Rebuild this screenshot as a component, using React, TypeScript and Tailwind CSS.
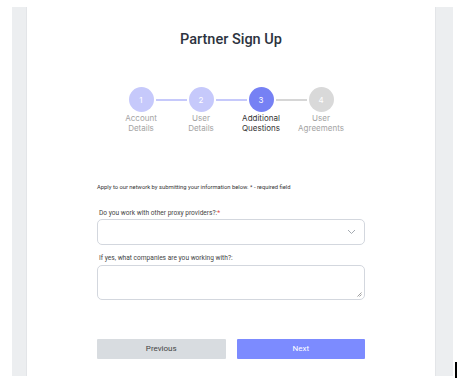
import React from 'react';

const steps = [
  { n: 1, label: ['Account', 'Details'], state: 'done' },
  { n: 2, label: ['User', 'Details'], state: 'done' },
  { n: 3, label: ['Additional', 'Questions'], state: 'active' },
  { n: 4, label: ['User', 'Agreements'], state: 'todo' },
];

const circleClass: Record<string, string> = {
  done: 'bg-[#c6c9fb]',
  active: 'bg-[#7681f4]',
  todo: 'bg-[#d9d9d9]',
};

const Stepper: React.FC = () => (
  <div className="flex flex-col items-center font-['Inter',sans-serif]">
    <div className="flex items-center">
      {steps.map((s, i) => (
        <React.Fragment key={s.n}>
          <div
            className={`w-[25px] h-[25px] rounded-full flex items-center justify-center text-[8px] text-white ${circleClass[s.state]}`}
          >
            {s.n}
          </div>
          {i < steps.length - 1 && (
            <div
              className={`w-[31px] h-[2px] mx-[2px] ${i < 2 ? 'bg-[#c6c9fb]' : 'bg-[#d6d6d6]'}`}
            />
          )}
        </React.Fragment>
      ))}
    </div>
    <div className="flex mt-[1px]">
      {steps.map((s) => (
        <div
          key={s.n}
          className={`w-[60px] text-center text-[8px] leading-[10px] ${s.state === 'active' ? 'text-[#333]' : 'text-[#a3a3a3]'}`}
        >
          <div>{s.label[0]}</div>
          <div>{s.label[1]}</div>
        </div>
      ))}
    </div>
  </div>
);

const App: React.FC = () => {
  return (
    <div className="relative w-[460px] h-[382px] bg-white pt-[7px] pb-[6px] flex font-['Roboto',sans-serif]">
      <div className="w-[12px]" />
      <div className="w-[15px] bg-[#eceef0] border-r border-[#e3e5e8]" />
      <div className="flex-1 flex flex-col items-center pt-[23px]">
        <h1 className="text-[14.5px] leading-[20px] font-medium text-[#2d3340]">Partner Sign Up</h1>

        <div className="mt-[37px]">
          <Stepper />
        </div>

        <div className="w-[268px] mt-[50px]">
          <p className="text-[5.8px] leading-[8px] text-[#333]">
            Apply to our network by submitting your information below. * - required field
          </p>

          <label className="block mt-[18px] ml-[2px] text-[6.6px] leading-[9px] text-[#444]">
            Do you work with other proxy providers?:<span className="text-[#e53e3e]">*</span>
          </label>
          <div className="mt-[1px] h-[26px] rounded-[5px] border border-[#d3d7de] flex items-center justify-end pr-[8px]">
            <svg width="9" height="6" viewBox="0 0 9 6" fill="none">
              <path d="M1 1l3.5 3.5L8 1" stroke="#9aa0a8" strokeWidth="0.9" />
            </svg>
          </div>

          <label className="block mt-[9px] ml-[2px] text-[6.6px] leading-[9px] text-[#444]">
            If yes, what companies are you working with?:
          </label>
          <div className="relative mt-[2px] h-[35px] rounded-[5px] border border-[#d3d7de]">
            <svg className="absolute right-[2px] bottom-[2px]" width="5" height="5" viewBox="0 0 5 5">
              <path d="M4.5 0.5L0.5 4.5M4.5 2.5L2.5 4.5" stroke="#777" strokeWidth="0.7" />
            </svg>
          </div>

          <div className="mt-[39px] flex gap-[11px]">
            <button className="flex-1 h-[20px] bg-[#d8dce0] text-[#444] text-[8px] rounded-[1px]">Previous</button>
            <button className="flex-1 h-[20px] bg-[#7c8bff] text-white text-[8px] rounded-[1px]">Next</button>
          </div>
        </div>
      </div>
      <div className="w-[18px] bg-[#eceef0] border-l border-[#e3e5e8]" />
      <div className="w-[7px]" />
      <div className="absolute left-[455px] top-[362px] w-[1.5px] h-[16px] bg-black" />
    </div>
  );
};

export default App;
